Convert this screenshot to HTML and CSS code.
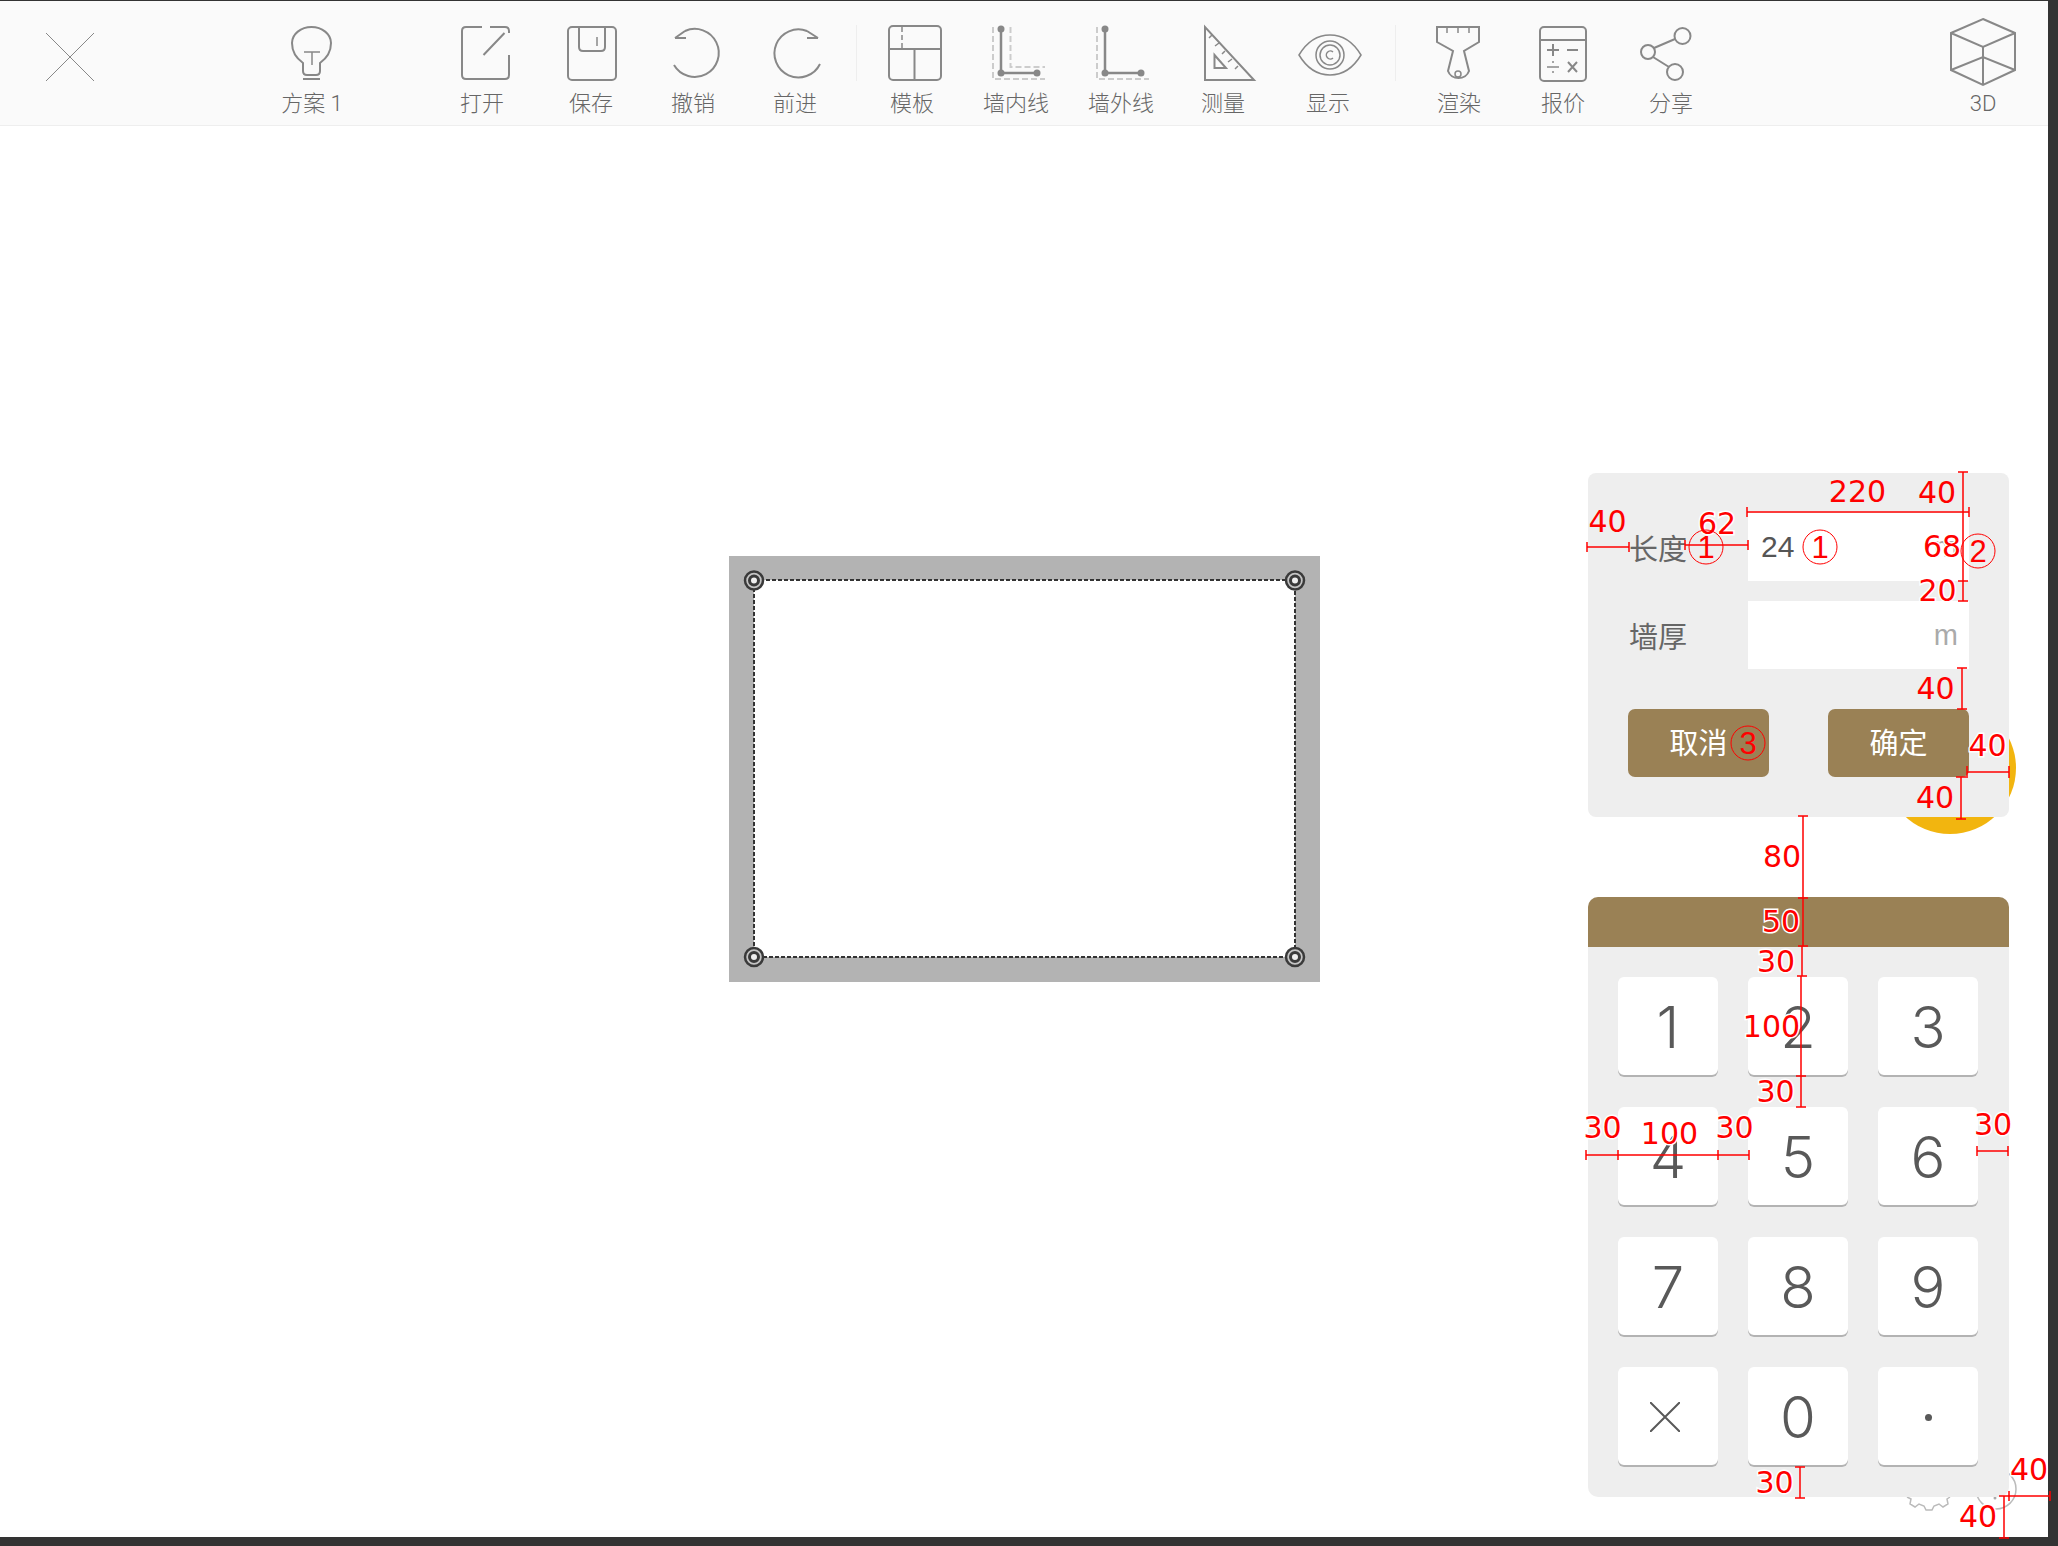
FILE: index.html
```html
<!doctype html>
<html>
<head>
    <title>户型编辑</title>
    <meta charset="utf-8" />
    <link rel="stylesheet" href="styles.css">
</head>

<body>
	<div class="screen">
		<div class="toolbar">
			<div class="tool t-close">
				<svg viewBox="0 0 100 70"><path class="thin" d="M26 16 L74 64 M74 16 L26 64"/></svg>
			</div>
			<div class="tool t-plan">
				<svg viewBox="0 0 100 70"><path d="M41 46 C34 41 30 34 30 26 C30 17 39 10 49.5 10 C60 10 69 17 69 26 C69 34 65 41 58 46 V54 Q58 58 54 58 H45 Q41 58 41 54 Z M41 62 H58"/><path class="slim" d="M42 35 H58 M50 35 V48"/></svg>
				<span>方案 1</span>
			</div>
			<div class="tool t-open">
				<svg viewBox="0 0 100 70"><path d="M50 10 H34 Q30 10 30 14 V58 Q30 62 34 62 H73 Q77 62 77 58 V38 M58 10 H73 Q77 10 77 14 V16 M72.5 16 L51.5 38"/></svg>
				<span>打开</span>
			</div>
			<div class="tool t-save">
				<svg viewBox="0 0 100 70"><rect x="27" y="10" width="48" height="53" rx="4"/><path d="M38 10 V30 Q38 34 42 34 H60 Q64 34 64 30 V10"/><path class="slim" d="M56 20 V29"/></svg>
				<span>保存</span>
			</div>
			<div class="tool t-undo">
				<svg viewBox="0 0 100 70"><path d="M31 48 A24 24 0 1 0 42 14 M32 21 H43 M32 21 L42 14"/></svg>
				<span>撤销</span>
			</div>
			<div class="tool t-redo">
				<svg viewBox="0 0 100 70"><path d="M75 47 A24 24 0 1 1 62 14 M73 21 H62 M73 21 L62 14"/></svg>
				<span>前进</span>
			</div>
			<div class="tool-line l-first"></div>
			<div class="tool t-template">
				<svg viewBox="0 0 100 70"><rect x="27" y="9" width="52" height="54" rx="4"/><path d="M27 32 H79 M52.5 32 V63"/><path class="slim" stroke-dasharray="5 3" d="M40 10 V32"/></svg>
				<span>模板</span>
			</div>
			<div class="tool t-inner">
				<svg viewBox="0 0 100 70"><path class="dash" d="M27 10 V62 H79 M44.5 10 V50 H79"/><path class="thick" d="M35 12 V56 H71"/><circle class="dot" cx="35" cy="12" r="3.5"/><circle class="dot" cx="35" cy="56" r="3.5"/><circle class="dot" cx="71" cy="56" r="3.5"/></svg>
				<span>墙内线</span>
			</div>
			<div class="tool t-outer">
				<svg viewBox="0 0 100 70"><path class="dash" d="M26 10 V62 H78"/><path class="thick" d="M34 12 V56 H70"/><circle class="dot" cx="34" cy="12" r="3.5"/><circle class="dot" cx="34" cy="56" r="3.5"/><circle class="dot" cx="70" cy="56" r="3.5"/></svg>
				<span>墙外线</span>
			</div>
			<div class="tool t-measure">
				<svg viewBox="0 0 100 70"><path d="M32 10 V63 H81 Z M41.5 38 V51 H53 Z"/><path class="slim" d="M39 18 L36 21 M46 26 L42 29 M52 34 L49 37 M59 42 L55 45 M65 49 L62 52"/></svg>
				<span>测量</span>
			</div>
			<div class="tool t-show">
				<svg viewBox="0 0 100 70"><path class="slim" d="M21 38 C30 23 42 18 52 18 C62 18 74 23 83 38 C74 53 62 58 52 58 C42 58 30 53 21 38 Z"/><circle class="slim" cx="52" cy="38" r="14"/><circle class="slim" cx="52" cy="38" r="10"/><path class="slim" d="M55 35 A4 4 0 1 0 55 41"/></svg>
				<span>显示</span>
			</div>
			<div class="tool-line l-second"></div>
			<div class="tool t-render">
				<svg viewBox="0 0 100 70"><path d="M28 10 H70 V25 L55 34 L60 54 A11 10 0 0 1 39 54 L44 34 L28 25 Z"/><path class="slim" d="M38 10 V16 M49 10 V16 M60 10 V16"/><circle class="slim" cx="49" cy="57" r="3"/></svg>
				<span>渲染</span>
			</div>
			<div class="tool t-price">
				<svg viewBox="0 0 100 70"><rect x="27" y="10" width="46" height="54" rx="4"/><path d="M27 23 H73 M34 33 H46 M40 27 V39 M54 33 H65 M55 45 L64 55 M64 45 L55 55"/><path class="slim" d="M34 50 H46"/><circle class="dot" cx="40" cy="45" r="1"/><circle class="dot" cx="40" cy="55" r="1"/></svg>
				<span>报价</span>
			</div>
			<div class="tool t-share">
				<svg viewBox="0 0 100 70"><circle cx="61.5" cy="19" r="8"/><circle cx="27" cy="35" r="7"/><circle cx="54" cy="55" r="8"/><path d="M33 31 L54 22 M32 40 L48 50"/></svg>
				<span>分享</span>
			</div>
			<div class="tool t-3d">
				<svg viewBox="0 0 100 70"><path d="M50 2 L82 16 V53 L50 68 L18 53 V16 Z M18 16 L50 30 L82 16 M50 30 V68 M18 53 L50 40 L82 53"/></svg>
				<span>3D</span>
			</div>
		</div>

		<!-- 画布 -->
		<svg class="room" viewBox="0 0 591 426">
			<rect width="591" height="426" fill="#b3b3b3"/>
			<rect x="25" y="24" width="541" height="377" fill="#fff"/>
			<rect class="room-line" x="25" y="24" width="541" height="377"/>
			<g class="handle"><circle cx="25" cy="24.5" r="9"/><circle class="handle-in" cx="25" cy="24.5" r="4.5"/></g>
			<g class="handle"><circle cx="566" cy="24.5" r="9"/><circle class="handle-in" cx="566" cy="24.5" r="4.5"/></g>
			<g class="handle"><circle cx="25" cy="401" r="9"/><circle class="handle-in" cx="25" cy="401" r="4.5"/></g>
			<g class="handle"><circle cx="566" cy="401" r="9"/><circle class="handle-in" cx="566" cy="401" r="4.5"/></g>
		</svg>

		<!-- buttons under the panels -->
		<div class="fab-yellow"></div>
		<svg class="fab-icons" viewBox="0 0 130 50">
			<path d="M2 24 l4 2 -1 5 5 3 4 -3 5 2 2 4 h6 l2 -4 5 -2 4 3 5 -3 -1 -5 3 -2"/>
			<circle cx="91" cy="16" r="20"/>
			<circle class="fab-dot" cx="90" cy="25" r="1.5"/>
		</svg>

		<div class="side">
			<div class="panel">
				<div class="row">
					<label>长度</label>
					<div class="field"><span class="val">24</span><span class="unit">m</span></div>
				</div>
				<div class="row">
					<label>墙厚</label>
					<div class="field"><span class="val"></span><span class="unit">m</span></div>
				</div>
				<div class="btns">
					<div class="btn">取消</div>
					<div class="btn">确定</div>
				</div>
			</div>
			<div class="keypad">
				<div class="keypad-head"></div>
				<div class="keys">
					<div class="key">1</div>
					<div class="key">2</div>
					<div class="key">3</div>
					<div class="key">4</div>
					<div class="key">5</div>
					<div class="key">6</div>
					<div class="key">7</div>
					<div class="key">8</div>
					<div class="key">9</div>
					<div class="key"><svg class="key-x" viewBox="0 0 30 30"><path d="M0 0 L30 30 M30 0 L0 30"/></svg></div>
					<div class="key">0</div>
					<div class="key"><span class="key-dot"></span></div>
				</div>
			</div>
		</div>
	</div>

	<!-- 标注 -->
	<svg class="marks" viewBox="0 0 2058 1546">
		<path class="dim" d="M1587 547 H1629 M1587 542 V552 M1629 542 V552
			M1685 545 H1748 M1685 540 V550 M1748 540 V550
			M1747 512 H1969 M1747 507 V517 M1969 507 V517
			M1963 472 V581 M1958 472 H1968 M1958 581 H1968
			M1963 581 V601 M1958 601 H1968
			M1962 668 V709 M1957 668 H1967 M1957 709 H1967
			M1967 772 H2009 M1967 766 V778 M2009 766 V778
			M1961 777 V819 M1956 777 H1966 M1956 819 H1966
			M1803 816 V898 M1798 816 H1808
			M1803 898 V946 M1798 898 H1808 M1798 946 H1808
			M1802 946 V976 M1797 976 H1807
			M1801 976 V1076 M1796 1076 H1806
			M1801 1076 V1107 M1796 1107 H1806
			M1586 1155 H1749 M1586 1150 V1160 M1618 1150 V1160 M1718 1150 V1160 M1749 1150 V1160
			M1977 1151 H2008 M1977 1146 V1156 M2008 1146 V1156
			M1800 1467 V1498 M1795 1467 H1805 M1795 1498 H1805
			M2009 1496 H2050 M2009 1491 V1501 M2050 1491 V1501
			M2004 1496 V1538 M1999 1496 H2009 M1999 1538 H2009"/>
		<text x="1607.5" y="532">40</text>
		<text class="halo" x="1717" y="534">62</text>
		<text x="1857.5" y="502">220</text>
		<text x="1937" y="503">40</text>
		<text class="halo" x="1942" y="557">68</text>
		<text class="halo" x="1937.5" y="601">20</text>
		<text x="1935.5" y="699">40</text>
		<text class="halo" x="1987.5" y="756">40</text>
		<text x="1935" y="808">40</text>
		<text x="1782" y="867">80</text>
		<text class="halo" x="1781" y="932">50</text>
		<text class="halo" x="1776" y="972">30</text>
		<text class="halo" x="1771.5" y="1037">100</text>
		<text class="halo" x="1775.5" y="1102">30</text>
		<text class="halo" x="1602.5" y="1138">30</text>
		<text class="halo" x="1669.5" y="1144">100</text>
		<text class="halo" x="1734.5" y="1138">30</text>
		<text class="halo" x="1993" y="1135">30</text>
		<text class="halo" x="1774.5" y="1493">30</text>
		<text class="halo" x="2029" y="1480">40</text>
		<text class="halo" x="1978" y="1527">40</text>

		<circle class="ring" cx="1706" cy="547" r="17"/>
		<text class="num" x="1706" y="558">1</text>
		<circle class="ring" cx="1820" cy="547" r="17"/>
		<text class="num" x="1820" y="558">1</text>
		<circle class="ring" cx="1978" cy="551" r="17"/>
		<text class="num" x="1978" y="562">2</text>
		<circle class="ring" cx="1748" cy="743" r="17"/>
		<text class="num" x="1748" y="754">3</text>
	</svg>
</body>
</html>
```

FILE: styles.css
```css
html, body {
	margin: 0;
	padding: 0;
	overflow: hidden;
}
body {
	position: relative;
	width: 2058px;
	height: 1546px;
	background-color: #333;
	font-family: "Liberation Sans", "Noto Sans CJK SC", sans-serif;
}
.screen {
	position: relative;
	width: 2048px;
	height: 1536px;
	margin-top: 1px;
	background-color: #fff;
	overflow: hidden;
}

/* toolbar */
.toolbar {
	display: flex;
	align-items: flex-start;
	box-sizing: border-box;
	height: 125px;
	padding: 16px 0 0 20px;
	background-color: #fafafa;
	border-bottom: 1px solid #eee;
}
.tool {
	display: flex;
	flex-direction: column;
	align-items: center;
	flex: none;
	width: 100px;
	color: #666;
	font-family: Roboto, "Noto Sans CJK SC", sans-serif;
	font-size: 22px;
	font-weight: 300;
}
.tool svg {
	display: block;
	width: 100px;
	height: 70px;
	fill: none;
	stroke: #888;
	stroke-width: 2;
	overflow: visible;
}
.tool span {
	line-height: 34px;
	white-space: nowrap;
}
.tool .thin { stroke-width: 1; }
.tool .slim { stroke-width: 1.5; }
.tool .thick { stroke-width: 2.5; }
.tool .dash {
	stroke: #ccc;
	stroke-dasharray: 6 3;
}
.tool .dot {
	fill: #888;
	stroke: none;
}
.tool-line {
	flex: none;
	width: 1px;
	height: 56px;
	margin-top: 8px;
	background-color: #eee;
}
.t-plan { margin-left: 142px; }
.t-open { margin-left: 70px; }
.t-save { margin-left: 9px; }
.t-undo, .t-redo, .t-measure { margin-left: 2px; }
.l-first { margin-left: 11px; }
.t-template, .t-outer, .t-show { margin-left: 5px; }
.t-inner, .t-price { margin-left: 4px; }
.l-second { margin-left: 17px; }
.t-render { margin-left: 13px; }
.t-share { margin-left: 8px; }
.t-3d { margin-left: 212px; }

/* room */
.room {
	position: absolute;
	left: 729px;
	top: 555px;
	width: 591px;
	height: 426px;
}
.room-line {
	fill: none;
	stroke: #333;
	stroke-width: 2;
	stroke-dasharray: 4 2;
}
.handle circle {
	fill: #c4c4c4;
	stroke: #3a3a3a;
	stroke-width: 2.5;
}
.handle .handle-in {
	fill: #eee;
	stroke-width: 3;
}

/* round buttons, almost hidden by the panels */
.fab-yellow {
	position: absolute;
	left: 1884px;
	top: 701px;
	width: 132px;
	height: 132px;
	border-radius: 50%;
	background-color: #f2b50f;
}
.fab-icons {
	position: absolute;
	left: 1905px;
	top: 1472px;
	width: 130px;
	height: 50px;
	fill: none;
	stroke: #bbb;
	stroke-width: 1.5;
}
.fab-icons .fab-dot {
	fill: #aaa;
	stroke: none;
}

/* panels */
.side {
	position: absolute;
	left: 1588px;
	top: 472px;
	width: 421px;
}
.panel {
	padding: 40px;
	background-color: #eee;
	border-radius: 8px;
}
.row {
	display: flex;
	align-items: center;
	height: 68px;
	margin-bottom: 20px;
}
.row label {
	flex: none;
	width: 120px;
	padding-left: 1px;
	box-sizing: border-box;
	color: #666;
	font-size: 29px;
}
.field {
	display: flex;
	flex: 1;
	align-items: center;
	justify-content: space-between;
	height: 68px;
	padding: 0 11px 0 13px;
	background-color: #fff;
}
.val {
	color: #555;
	font-size: 30px;
}
.unit {
	color: #aaa;
	font-size: 29px;
}
.btns {
	display: flex;
	justify-content: space-between;
	margin-top: 40px;
}
.btn {
	width: 141px;
	height: 68px;
	line-height: 70px;
	text-align: center;
	background-color: #9a8155;
	border-radius: 7px;
	color: #fff;
	font-size: 29px;
}
.keypad {
	margin-top: 80px;
	background-color: #eee;
	border-radius: 10px;
	overflow: hidden;
}
.keypad-head {
	height: 50px;
	background-color: #9a8155;
}
.keys {
	display: grid;
	grid-template-columns: repeat(3, 100px);
	grid-auto-rows: 100px;
	gap: 30px;
	padding: 30px;
}
.key {
	display: flex;
	align-items: center;
	justify-content: center;
	background-color: #fff;
	border-radius: 6px;
	box-shadow: inset 0 -2px 0 #b3b3b3;
	color: #595959;
	font-family: Inter, "Liberation Sans", sans-serif;
	font-size: 58px;
	font-weight: 300;
}
.key-x {
	width: 30px;
	height: 30px;
	margin: 0 6px 0 0;
	fill: none;
	stroke: #595959;
	stroke-width: 2;
}
.key-dot {
	width: 7px;
	height: 7px;
	border-radius: 50%;
	background-color: #595959;
}

/* red measurements on top of everything */
.marks {
	position: absolute;
	left: 0;
	top: 0;
	width: 2058px;
	height: 1546px;
	pointer-events: none;
}
.marks .dim {
	fill: none;
	stroke: #f00;
	stroke-width: 1.5;
}
.marks text {
	fill: #f00;
	font-family: "DejaVu Sans", sans-serif;
	font-size: 30px;
	text-anchor: middle;
}
.marks .halo {
	stroke: #fff;
	stroke-width: 3;
	paint-order: stroke;
}
.marks .ring {
	fill: none;
	stroke: #f00;
	stroke-width: 1;
}
.marks .num {
	font-family: "Liberation Sans", sans-serif;
	font-size: 31px;
}
```
